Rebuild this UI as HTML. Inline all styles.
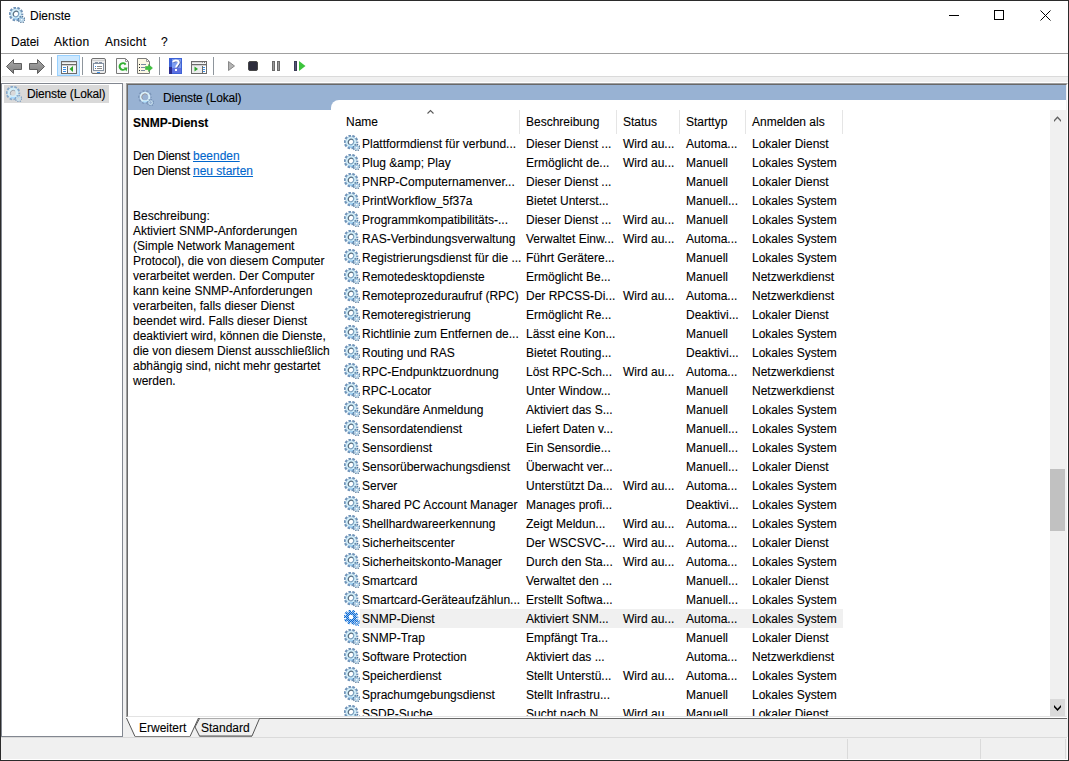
<!DOCTYPE html>
<html><head><meta charset="utf-8">
<style>
*{box-sizing:border-box;margin:0;padding:0}
html,body{width:1069px;height:761px;overflow:hidden;background:#fff}
body{font-family:"Liberation Sans",sans-serif;font-size:12px;color:#000;position:relative;-webkit-text-stroke:0.1px currentColor}
.a{position:absolute}
.t{position:absolute;white-space:nowrap;line-height:19px;height:19px}
.d{position:absolute;white-space:nowrap;line-height:15px;left:133px}
.lnk{color:#0066cc;text-decoration:underline}
</style></head><body>
<svg width="0" height="0" style="position:absolute">
<defs>
<pattern id="dith" width="2" height="2" patternUnits="userSpaceOnUse"><rect width="2" height="2" fill="#0a64d0"/><rect width="1" height="1" fill="#8cc0f0"/><rect x="1" y="1" width="1" height="1" fill="#8cc0f0"/></pattern>
<symbol id="g" viewBox="0 0 16 16">
<circle cx="7" cy="7" r="6.1" fill="none" stroke="#6f93b8" stroke-width="2.4" stroke-dasharray="2.5 1.33" stroke-dashoffset="1.3"/>
<circle cx="7" cy="7" r="3.8" fill="none" stroke="#c2e4f5" stroke-width="3"/>
<circle cx="7" cy="7" r="5.3" fill="none" stroke="#86abc9" stroke-width="0.5"/>
<circle cx="7" cy="7" r="4.1" fill="none" stroke="#d9f3fc" stroke-width="1.4"/>
<path d="M4.9 9.1A3 3 0 0 1 9.1 4.9" fill="none" stroke="#5b6f80" stroke-width="1.1"/>
<path d="M9.1 4.9A3 3 0 0 1 4.9 9.1" fill="none" stroke="#7d9fbd" stroke-width="1.1"/>
<path d="M5 11.6Q7 12.6 9.5 11.4" fill="none" stroke="#8cc8f5" stroke-width="1"/>
<circle cx="12.6" cy="12.6" r="3" fill="none" stroke="#4f7396" stroke-width="1.6" stroke-dasharray="1.2 1.15"/>
<circle cx="12.6" cy="12.6" r="1.6" fill="none" stroke="#a9cde6" stroke-width="1.4"/>
</symbol>
<symbol id="gsel" viewBox="0 0 16 16">
<circle cx="7" cy="7" r="6.1" fill="none" stroke="url(#dith)" stroke-width="2.4" stroke-dasharray="2.5 1.33" stroke-dashoffset="1.3"/>
<circle cx="7" cy="7" r="3.8" fill="none" stroke="url(#dith)" stroke-width="3"/>
<circle cx="12.6" cy="12.6" r="3" fill="none" stroke="url(#dith)" stroke-width="1.6" stroke-dasharray="1.2 1.15"/>
<circle cx="12.6" cy="12.6" r="1.6" fill="none" stroke="url(#dith)" stroke-width="1.4"/>
</symbol>
<symbol id="gh" viewBox="0 0 16 16">
<circle cx="7" cy="7" r="6.1" fill="none" stroke="#7590b4" stroke-opacity=".75" stroke-width="1.8" stroke-dasharray="2.1 1.73" stroke-dashoffset="1.3"/>
<circle cx="7" cy="7" r="4.3" fill="none" stroke="#d8f1fa" stroke-width="1.9"/>
<path d="M4.7 9.3A3.2 3.2 0 0 1 9.3 4.7" fill="none" stroke="#9a8478" stroke-opacity=".8" stroke-width="0.8"/>
<path d="M5 11.5Q7 12.5 9.5 11.3" fill="none" stroke="#a8dcff" stroke-width="1.1"/>
<circle cx="12.6" cy="12.6" r="3" fill="none" stroke="#6a88ac" stroke-opacity=".8" stroke-width="1.3" stroke-dasharray="1.1 1.25"/>
<circle cx="12.6" cy="12.6" r="1.8" fill="none" stroke="#cde6f2" stroke-width="1"/>
</symbol>
<symbol id="gt" viewBox="0 0 16 16">
<circle cx="7" cy="7" r="6.1" fill="none" stroke="#86a9cb" stroke-width="2.2" stroke-dasharray="2.5 1.33" stroke-dashoffset="1.3"/>
<circle cx="7" cy="7" r="4.1" fill="none" stroke="#d2eefa" stroke-width="2.6"/>
<path d="M4.9 9.1A3 3 0 0 1 9.1 4.9" fill="none" stroke="#8a8f98" stroke-opacity=".8" stroke-width="0.9"/>
<path d="M5 11.4Q7 12.4 9.5 11.2" fill="none" stroke="#9fd4ff" stroke-width="1.2"/>
<circle cx="12.6" cy="12.6" r="3" fill="none" stroke="#7a9cc0" stroke-width="1.4" stroke-dasharray="1.2 1.15"/>
<circle cx="12.6" cy="12.6" r="1.7" fill="none" stroke="#c4e2f2" stroke-width="1.2"/>
</symbol>
</defs>
</svg>

<!-- window frame -->
<div class="a" style="left:0;top:0;width:1069px;height:761px;border:1px solid #2b2b2b"></div>

<!-- title bar -->
<svg class="a" style="left:9px;top:7px" width="16" height="16"><use href="#g"/></svg>
<div class="t" style="left:30px;top:7px">Dienste</div>
<div class="a" style="left:949px;top:15px;width:10px;height:1px;background:#000"></div>
<div class="a" style="left:994px;top:10px;width:10px;height:10px;border:1px solid #000"></div>
<svg class="a" style="left:1040px;top:10px" width="11" height="11"><path d="M0.5 0.5L10.5 10.5M10.5 0.5L0.5 10.5" stroke="#000" stroke-width="1"/></svg>

<!-- menu bar -->
<div class="t" style="left:11px;top:33px">Datei</div>
<div class="t" style="left:54px;top:33px;letter-spacing:0.35px">Aktion</div>
<div class="t" style="left:105px;top:33px;letter-spacing:0.3px">Ansicht</div>
<div class="t" style="left:161px;top:33px">?</div>
<div class="a" style="left:1px;top:53px;width:1067px;height:1px;background:#a0a0a0"></div>

<!-- toolbar -->
<div id="toolbar"><svg class="a" style="left:0;top:54px" width="320" height="22" shape-rendering="crispEdges">
<defs>
<linearGradient id="arr" x1="0" y1="0" x2="0" y2="1"><stop offset="0" stop-color="#a9a9a9"/><stop offset="1" stop-color="#7d7d7d"/></linearGradient>
</defs>
<g transform="translate(0,-54)">
<!-- back / forward -->
<path d="M6.5 66.5L13.5 59.5V63.5H21.5V69.5H13.5V73.5Z" fill="url(#arr)" stroke="#5e5e5e" stroke-width="1" shape-rendering="geometricPrecision"/>
<path d="M44.5 66.5L37.5 59.5V63.5H29.5V69.5H37.5V73.5Z" fill="url(#arr)" stroke="#5e5e5e" stroke-width="1" shape-rendering="geometricPrecision"/>
<rect x="51" y="57" width="1" height="18" fill="#8e959c"/>
<!-- pressed toggle button -->
<rect x="57.5" y="55.5" width="22" height="20" fill="#cce8ff" stroke="#99d1ff"/>
<rect x="61.5" y="61.5" width="15" height="12" fill="#f4f4f4" stroke="#6b6b6b"/>
<rect x="62" y="62" width="14" height="1" fill="#d8d8d8"/>
<rect x="62" y="64" width="14" height="1" fill="#6b6b6b"/>
<rect x="62" y="65" width="14" height="1" fill="#cfcfcf"/>
<rect x="67" y="66" width="1" height="7" fill="#6b6b6b"/>
<rect x="62" y="66" width="5" height="7" fill="#fff"/>
<rect x="63" y="67" width="3" height="1" fill="#3b8fe6"/>
<rect x="63" y="69" width="3" height="1" fill="#3b8fe6"/>
<rect x="63" y="71" width="3" height="1" fill="#3b8fe6"/>
<path d="M69.5 69L73 66V72Z" fill="#2aa52a" shape-rendering="geometricPrecision"/>
<rect x="82" y="57" width="1" height="18" fill="#8e959c"/>
<!-- properties -->
<rect x="91.5" y="58.5" width="14" height="15" rx="1.5" fill="#ececec" stroke="#6f6f6f" shape-rendering="geometricPrecision"/>
<rect x="92" y="60" width="13" height="1" fill="#d0d0d0"/>
<rect x="93.5" y="63.5" width="10" height="7" fill="#fff" stroke="#8592a3"/>
<rect x="95" y="62" width="3" height="2" fill="#8592a3"/>
<rect x="99" y="62" width="3" height="2" fill="#8592a3"/>
<rect x="95" y="66" width="1" height="1" fill="#2f8ff0"/>
<rect x="97" y="66" width="5" height="1" fill="#8a8a8a"/>
<rect x="95" y="68" width="1" height="1" fill="#777"/>
<rect x="97" y="68" width="5" height="1" fill="#8a8a8a"/>
<rect x="97" y="72" width="3" height="1" fill="#3a8ee6"/>
<!-- refresh doc -->
<path d="M116.5 58.5H125.5L128.5 61.5V73.5H116.5Z" fill="#fafafa" stroke="#7a7a7a" shape-rendering="geometricPrecision"/>
<path d="M125.5 58.5V61.5H128.5" fill="none" stroke="#9a9a9a" shape-rendering="geometricPrecision"/>
<path d="M124.8 69.2A3.3 3.3 0 1 1 125.6 64.6" fill="none" stroke="#32b032" stroke-width="2" shape-rendering="geometricPrecision"/>
<path d="M123.5 67.5L127.5 67.5L126.5 71.5Z" fill="#32b032" shape-rendering="geometricPrecision"/>
<!-- export list -->
<path d="M137.5 58.5H146.5L149.5 61.5V73.5H137.5Z" fill="#fcf8e4" stroke="#7a7a7a" shape-rendering="geometricPrecision"/>
<path d="M146.5 58.5V61.5H149.5" fill="none" stroke="#9a9a9a" shape-rendering="geometricPrecision"/>
<rect x="139" y="64" width="1" height="1" fill="#222"/>
<rect x="139" y="67" width="1" height="1" fill="#222"/>
<rect x="139" y="70" width="1" height="1" fill="#222"/>
<rect x="141" y="64" width="5" height="1" fill="#7a8aa0"/>
<rect x="141" y="67" width="4" height="1" fill="#7a8aa0"/>
<rect x="141" y="70" width="4" height="1" fill="#7a8aa0"/>
<path d="M145.5 66.5H148.5V64.5L152.5 68L148.5 71.5V69.5H145.5Z" fill="#3cc43c" stroke="#2ea02e" stroke-width=".5" shape-rendering="geometricPrecision"/>
<rect x="159" y="57" width="1" height="18" fill="#8e959c"/>
<!-- help -->
<rect x="169" y="58" width="13" height="16" fill="#3d62d6"/>
<rect x="169" y="67" width="3" height="7" fill="#2c2c8e"/>
<rect x="172" y="59" width="9" height="14" fill="#7d9cf0"/>
<rect x="172" y="68" width="9" height="5" fill="#5d6fe0"/>
<path d="M174 62.5C174 60.3 179.5 60.2 179.5 62.8C179.5 64.8 177 65.2 177 67.8" fill="none" stroke="#3a4a8a" stroke-width="2" shape-rendering="geometricPrecision"/>
<path d="M173.2 62.2C173.2 59.8 178.8 59.8 178.8 62.5C178.8 64.5 176.2 64.8 176.2 67.5" fill="none" stroke="#fff" stroke-width="2" shape-rendering="geometricPrecision"/>
<rect x="175" y="69" width="2" height="2" fill="#fff"/>
<!-- window play -->
<rect x="191.5" y="61.5" width="15" height="12" fill="#f4f4f4" stroke="#6b6b6b"/>
<rect x="192" y="62" width="11" height="1" fill="#d8d8d8"/>
<rect x="204" y="62" width="1" height="1" fill="#777"/>
<rect x="202" y="62" width="1" height="1" fill="#999"/>
<rect x="192" y="64" width="14" height="1" fill="#6b6b6b"/>
<rect x="192" y="65" width="14" height="1" fill="#cfcfcf"/>
<rect x="202" y="66" width="1" height="7" fill="#6b6b6b"/>
<rect x="192" y="66" width="10" height="7" fill="#ededed"/>
<rect x="203" y="66" width="3" height="7" fill="#fff"/>
<rect x="203" y="67" width="2" height="1" fill="#3b8fe6"/>
<rect x="203" y="69" width="2" height="1" fill="#3b8fe6"/>
<rect x="203" y="71" width="2" height="1" fill="#3b8fe6"/>
<path d="M194.5 66.5L198 69L194.5 71.5Z" fill="#2aa52a" shape-rendering="geometricPrecision"/>
<rect x="213" y="57" width="1" height="18" fill="#8e959c"/>
<!-- play disabled -->
<path d="M228.5 61.5L234.5 66L228.5 70.5Z" fill="#b4b4b4" stroke="#888" shape-rendering="geometricPrecision"/>
<!-- stop -->
<rect x="248.5" y="61.5" width="9" height="9" rx="1.5" fill="#2c2c3c" stroke="#474747" shape-rendering="geometricPrecision"/>
<!-- pause -->
<rect x="272.5" y="61.5" width="2" height="9" fill="#9a9a9a" stroke="#6a6a6a"/>
<rect x="277.5" y="61.5" width="2" height="9" fill="#9a9a9a" stroke="#6a6a6a"/>
<!-- restart -->
<rect x="294.5" y="61.5" width="2" height="9" fill="#555577" stroke="#3a3a55"/>
<path d="M299 61L305.5 66L299 71Z" fill="#3cc43c" shape-rendering="geometricPrecision"/>
</g>
</svg>
</div>
<div class="a" style="left:2px;top:76px;width:1066px;height:1px;background:#dadada"></div>
<div class="a" style="left:1px;top:77px;width:1067px;height:683px;background:#f0f0f0"></div>
<div class="a" style="left:1px;top:82px;width:1067px;height:1px;background:#fff"></div>

<!-- left pane -->
<div class="a" style="left:1px;top:83px;width:122px;height:654px;border:1px solid #828790;background:#fff"></div>
<div class="a" style="left:4px;top:85px;width:105px;height:18px;background:#d9d9d9"></div>
<svg class="a" style="left:6px;top:86px" width="16" height="16"><use href="#gt"/></svg>
<div class="t" style="left:27px;top:85px;letter-spacing:-0.15px">Dienste (Lokal)</div>

<!-- right pane -->
<div class="a" style="left:126px;top:83px;width:942px;height:635px;border-left:1px solid #a0a0a0;border-top:1px solid #a0a0a0;border-right:1px solid #fff;border-bottom:1px solid #fff;background:#fff"></div>
<div class="a" style="left:127px;top:84px;width:940px;height:633px;border-left:1px solid #696969;border-top:1px solid #696969;border-right:1px solid #f0f0f0;border-bottom:1px solid #e3e3e3"></div>
<div class="a" style="left:128px;top:85px;width:938px;height:15px;background:#98b2d3"></div>
<div class="a" style="left:128px;top:100px;width:211px;height:10px;background:#98b2d3"></div>
<div class="a" style="left:331px;top:100px;width:16px;height:10px;background:#fff;border-top-left-radius:8px"></div>
<svg class="a" style="left:138px;top:90px" width="16" height="16"><use href="#gh"/></svg>
<div class="t" style="left:163px;top:89px;letter-spacing:-0.15px">Dienste (Lokal)</div>

<!-- description panel -->
<div class="t" style="left:133px;top:114px;font-weight:bold">SNMP-Dienst</div>
<div class="d" style="top:149px;letter-spacing:-0.25px">Den Dienst</div><div class="d lnk" style="top:149px;left:193px">beenden</div>
<div class="d" style="top:164px;letter-spacing:-0.25px">Den Dienst</div><div class="d lnk" style="top:164px;left:193px">neu starten</div>
<div class="d" style="top:209px">Beschreibung:</div>
<div class="d" style="top:224px">Aktiviert SNMP-Anforderungen</div>
<div class="d" style="top:239px">(Simple Network Management</div>
<div class="d" style="top:254px">Protocol), die von diesem Computer</div>
<div class="d" style="top:269px">verarbeitet werden. Der Computer</div>
<div class="d" style="top:284px">kann keine SNMP-Anforderungen</div>
<div class="d" style="top:299px">verarbeiten, falls dieser Dienst</div>
<div class="d" style="top:314px">beendet wird. Falls dieser Dienst</div>
<div class="d" style="top:329px">deaktiviert wird, können die Dienste,</div>
<div class="d" style="top:344px">die von diesem Dienst ausschließlich</div>
<div class="d" style="top:359px">abhängig sind, nicht mehr gestartet</div>
<div class="d" style="top:374px">werden.</div>

<!-- list header -->
<div class="t" style="left:346px;top:113px">Name</div>
<div class="t" style="left:526px;top:113px">Beschreibung</div>
<div class="t" style="left:623px;top:113px">Status</div>
<div class="t" style="left:686px;top:113px">Starttyp</div>
<div class="t" style="left:752px;top:113px">Anmelden als</div>
<div class="a" style="left:519px;top:110px;width:1px;height:24px;background:#e5e5e5"></div>
<div class="a" style="left:616px;top:110px;width:1px;height:24px;background:#e5e5e5"></div>
<div class="a" style="left:679px;top:110px;width:1px;height:24px;background:#e5e5e5"></div>
<div class="a" style="left:745px;top:110px;width:1px;height:24px;background:#e5e5e5"></div>
<div class="a" style="left:842px;top:110px;width:1px;height:24px;background:#e5e5e5"></div>
<svg class="a" style="left:426px;top:109px" width="9" height="6"><path d="M1.5 4.5L4.5 1.5L7.5 4.5" fill="none" stroke="#5a5a5a" stroke-width="1.1"/></svg>

<!-- list rows -->
<div class="a" style="left:331px;top:110px;width:719px;height:606px;overflow:hidden">
<svg class="a" style="left:13px;top:25px" width="16" height="16"><use href="#g"/></svg>
<div class="t" style="left:31px;top:25px">Plattformdienst für verbund...</div>
<div class="t" style="left:195px;top:25px">Dieser Dienst ...</div>
<div class="t" style="left:292px;top:25px">Wird au...</div>
<div class="t" style="left:355px;top:25px">Automa...</div>
<div class="t" style="left:421px;top:25px">Lokaler Dienst</div>
<svg class="a" style="left:13px;top:44px" width="16" height="16"><use href="#g"/></svg>
<div class="t" style="left:31px;top:44px">Plug &amp;amp; Play</div>
<div class="t" style="left:195px;top:44px">Ermöglicht de...</div>
<div class="t" style="left:292px;top:44px">Wird au...</div>
<div class="t" style="left:355px;top:44px">Manuell</div>
<div class="t" style="left:421px;top:44px">Lokales System</div>
<svg class="a" style="left:13px;top:63px" width="16" height="16"><use href="#g"/></svg>
<div class="t" style="left:31px;top:63px">PNRP-Computernamenver...</div>
<div class="t" style="left:195px;top:63px">Dieser Dienst ...</div>
<div class="t" style="left:355px;top:63px">Manuell</div>
<div class="t" style="left:421px;top:63px">Lokaler Dienst</div>
<svg class="a" style="left:13px;top:82px" width="16" height="16"><use href="#g"/></svg>
<div class="t" style="left:31px;top:82px">PrintWorkflow_5f37a</div>
<div class="t" style="left:195px;top:82px">Bietet Unterst...</div>
<div class="t" style="left:355px;top:82px">Manuell...</div>
<div class="t" style="left:421px;top:82px">Lokales System</div>
<svg class="a" style="left:13px;top:101px" width="16" height="16"><use href="#g"/></svg>
<div class="t" style="left:31px;top:101px">Programmkompatibilitäts-...</div>
<div class="t" style="left:195px;top:101px">Dieser Dienst ...</div>
<div class="t" style="left:292px;top:101px">Wird au...</div>
<div class="t" style="left:355px;top:101px">Manuell</div>
<div class="t" style="left:421px;top:101px">Lokales System</div>
<svg class="a" style="left:13px;top:120px" width="16" height="16"><use href="#g"/></svg>
<div class="t" style="left:31px;top:120px">RAS-Verbindungsverwaltung</div>
<div class="t" style="left:195px;top:120px">Verwaltet Einw...</div>
<div class="t" style="left:292px;top:120px">Wird au...</div>
<div class="t" style="left:355px;top:120px">Automa...</div>
<div class="t" style="left:421px;top:120px">Lokales System</div>
<svg class="a" style="left:13px;top:139px" width="16" height="16"><use href="#g"/></svg>
<div class="t" style="left:31px;top:139px">Registrierungsdienst für die ...</div>
<div class="t" style="left:195px;top:139px">Führt Gerätere...</div>
<div class="t" style="left:355px;top:139px">Manuell</div>
<div class="t" style="left:421px;top:139px">Lokales System</div>
<svg class="a" style="left:13px;top:158px" width="16" height="16"><use href="#g"/></svg>
<div class="t" style="left:31px;top:158px">Remotedesktopdienste</div>
<div class="t" style="left:195px;top:158px">Ermöglicht Be...</div>
<div class="t" style="left:355px;top:158px">Manuell</div>
<div class="t" style="left:421px;top:158px">Netzwerkdienst</div>
<svg class="a" style="left:13px;top:177px" width="16" height="16"><use href="#g"/></svg>
<div class="t" style="left:31px;top:177px">Remoteprozeduraufruf (RPC)</div>
<div class="t" style="left:195px;top:177px">Der RPCSS-Di...</div>
<div class="t" style="left:292px;top:177px">Wird au...</div>
<div class="t" style="left:355px;top:177px">Automa...</div>
<div class="t" style="left:421px;top:177px">Netzwerkdienst</div>
<svg class="a" style="left:13px;top:196px" width="16" height="16"><use href="#g"/></svg>
<div class="t" style="left:31px;top:196px">Remoteregistrierung</div>
<div class="t" style="left:195px;top:196px">Ermöglicht Re...</div>
<div class="t" style="left:355px;top:196px">Deaktivi...</div>
<div class="t" style="left:421px;top:196px">Lokaler Dienst</div>
<svg class="a" style="left:13px;top:215px" width="16" height="16"><use href="#g"/></svg>
<div class="t" style="left:31px;top:215px">Richtlinie zum Entfernen de...</div>
<div class="t" style="left:195px;top:215px">Lässt eine Kon...</div>
<div class="t" style="left:355px;top:215px">Manuell</div>
<div class="t" style="left:421px;top:215px">Lokales System</div>
<svg class="a" style="left:13px;top:234px" width="16" height="16"><use href="#g"/></svg>
<div class="t" style="left:31px;top:234px">Routing und RAS</div>
<div class="t" style="left:195px;top:234px">Bietet Routing...</div>
<div class="t" style="left:355px;top:234px">Deaktivi...</div>
<div class="t" style="left:421px;top:234px">Lokales System</div>
<svg class="a" style="left:13px;top:253px" width="16" height="16"><use href="#g"/></svg>
<div class="t" style="left:31px;top:253px">RPC-Endpunktzuordnung</div>
<div class="t" style="left:195px;top:253px">Löst RPC-Sch...</div>
<div class="t" style="left:292px;top:253px">Wird au...</div>
<div class="t" style="left:355px;top:253px">Automa...</div>
<div class="t" style="left:421px;top:253px">Netzwerkdienst</div>
<svg class="a" style="left:13px;top:272px" width="16" height="16"><use href="#g"/></svg>
<div class="t" style="left:31px;top:272px">RPC-Locator</div>
<div class="t" style="left:195px;top:272px">Unter Window...</div>
<div class="t" style="left:355px;top:272px">Manuell</div>
<div class="t" style="left:421px;top:272px">Netzwerkdienst</div>
<svg class="a" style="left:13px;top:291px" width="16" height="16"><use href="#g"/></svg>
<div class="t" style="left:31px;top:291px">Sekundäre Anmeldung</div>
<div class="t" style="left:195px;top:291px">Aktiviert das S...</div>
<div class="t" style="left:355px;top:291px">Manuell</div>
<div class="t" style="left:421px;top:291px">Lokales System</div>
<svg class="a" style="left:13px;top:310px" width="16" height="16"><use href="#g"/></svg>
<div class="t" style="left:31px;top:310px">Sensordatendienst</div>
<div class="t" style="left:195px;top:310px">Liefert Daten v...</div>
<div class="t" style="left:355px;top:310px">Manuell...</div>
<div class="t" style="left:421px;top:310px">Lokales System</div>
<svg class="a" style="left:13px;top:329px" width="16" height="16"><use href="#g"/></svg>
<div class="t" style="left:31px;top:329px">Sensordienst</div>
<div class="t" style="left:195px;top:329px">Ein Sensordie...</div>
<div class="t" style="left:355px;top:329px">Manuell...</div>
<div class="t" style="left:421px;top:329px">Lokales System</div>
<svg class="a" style="left:13px;top:348px" width="16" height="16"><use href="#g"/></svg>
<div class="t" style="left:31px;top:348px">Sensorüberwachungsdienst</div>
<div class="t" style="left:195px;top:348px">Überwacht ver...</div>
<div class="t" style="left:355px;top:348px">Manuell...</div>
<div class="t" style="left:421px;top:348px">Lokaler Dienst</div>
<svg class="a" style="left:13px;top:367px" width="16" height="16"><use href="#g"/></svg>
<div class="t" style="left:31px;top:367px">Server</div>
<div class="t" style="left:195px;top:367px">Unterstützt Da...</div>
<div class="t" style="left:292px;top:367px">Wird au...</div>
<div class="t" style="left:355px;top:367px">Automa...</div>
<div class="t" style="left:421px;top:367px">Lokales System</div>
<svg class="a" style="left:13px;top:386px" width="16" height="16"><use href="#g"/></svg>
<div class="t" style="left:31px;top:386px">Shared PC Account Manager</div>
<div class="t" style="left:195px;top:386px">Manages profi...</div>
<div class="t" style="left:355px;top:386px">Deaktivi...</div>
<div class="t" style="left:421px;top:386px">Lokales System</div>
<svg class="a" style="left:13px;top:405px" width="16" height="16"><use href="#g"/></svg>
<div class="t" style="left:31px;top:405px">Shellhardwareerkennung</div>
<div class="t" style="left:195px;top:405px">Zeigt Meldun...</div>
<div class="t" style="left:292px;top:405px">Wird au...</div>
<div class="t" style="left:355px;top:405px">Automa...</div>
<div class="t" style="left:421px;top:405px">Lokales System</div>
<svg class="a" style="left:13px;top:424px" width="16" height="16"><use href="#g"/></svg>
<div class="t" style="left:31px;top:424px">Sicherheitscenter</div>
<div class="t" style="left:195px;top:424px">Der WSCSVC-...</div>
<div class="t" style="left:292px;top:424px">Wird au...</div>
<div class="t" style="left:355px;top:424px">Automa...</div>
<div class="t" style="left:421px;top:424px">Lokaler Dienst</div>
<svg class="a" style="left:13px;top:443px" width="16" height="16"><use href="#g"/></svg>
<div class="t" style="left:31px;top:443px">Sicherheitskonto-Manager</div>
<div class="t" style="left:195px;top:443px">Durch den Sta...</div>
<div class="t" style="left:292px;top:443px">Wird au...</div>
<div class="t" style="left:355px;top:443px">Automa...</div>
<div class="t" style="left:421px;top:443px">Lokales System</div>
<svg class="a" style="left:13px;top:462px" width="16" height="16"><use href="#g"/></svg>
<div class="t" style="left:31px;top:462px">Smartcard</div>
<div class="t" style="left:195px;top:462px">Verwaltet den ...</div>
<div class="t" style="left:355px;top:462px">Manuell...</div>
<div class="t" style="left:421px;top:462px">Lokaler Dienst</div>
<svg class="a" style="left:13px;top:481px" width="16" height="16"><use href="#g"/></svg>
<div class="t" style="left:31px;top:481px">Smartcard-Geräteaufzählun...</div>
<div class="t" style="left:195px;top:481px">Erstellt Softwa...</div>
<div class="t" style="left:355px;top:481px">Manuell...</div>
<div class="t" style="left:421px;top:481px">Lokales System</div>
<div class="a" style="left:29px;top:499px;width:483px;height:19px;background:#f0f0f0"></div>
<svg class="a" style="left:13px;top:500px" width="16" height="16"><use href="#gsel"/></svg>
<div class="t" style="left:31px;top:500px">SNMP-Dienst</div>
<div class="t" style="left:195px;top:500px">Aktiviert SNM...</div>
<div class="t" style="left:292px;top:500px">Wird au...</div>
<div class="t" style="left:355px;top:500px">Automa...</div>
<div class="t" style="left:421px;top:500px">Lokales System</div>
<svg class="a" style="left:13px;top:519px" width="16" height="16"><use href="#g"/></svg>
<div class="t" style="left:31px;top:519px">SNMP-Trap</div>
<div class="t" style="left:195px;top:519px">Empfängt Tra...</div>
<div class="t" style="left:355px;top:519px">Manuell</div>
<div class="t" style="left:421px;top:519px">Lokaler Dienst</div>
<svg class="a" style="left:13px;top:538px" width="16" height="16"><use href="#g"/></svg>
<div class="t" style="left:31px;top:538px">Software Protection</div>
<div class="t" style="left:195px;top:538px">Aktiviert das ...</div>
<div class="t" style="left:355px;top:538px">Automa...</div>
<div class="t" style="left:421px;top:538px">Netzwerkdienst</div>
<svg class="a" style="left:13px;top:557px" width="16" height="16"><use href="#g"/></svg>
<div class="t" style="left:31px;top:557px">Speicherdienst</div>
<div class="t" style="left:195px;top:557px">Stellt Unterstü...</div>
<div class="t" style="left:292px;top:557px">Wird au...</div>
<div class="t" style="left:355px;top:557px">Automa...</div>
<div class="t" style="left:421px;top:557px">Lokales System</div>
<svg class="a" style="left:13px;top:576px" width="16" height="16"><use href="#g"/></svg>
<div class="t" style="left:31px;top:576px">Sprachumgebungsdienst</div>
<div class="t" style="left:195px;top:576px">Stellt Infrastru...</div>
<div class="t" style="left:355px;top:576px">Manuell</div>
<div class="t" style="left:421px;top:576px">Lokales System</div>
<svg class="a" style="left:13px;top:595px" width="16" height="16"><use href="#g"/></svg>
<div class="t" style="left:31px;top:595px">SSDP-Suche</div>
<div class="t" style="left:195px;top:595px">Sucht nach N...</div>
<div class="t" style="left:292px;top:595px">Wird au...</div>
<div class="t" style="left:355px;top:595px">Manuell</div>
<div class="t" style="left:421px;top:595px">Lokaler Dienst</div>
</div>

<!-- scrollbar -->
<div class="a" style="left:1050px;top:110px;width:16px;height:606px;background:#f0f0f0"></div>
<svg class="a" style="left:1050px;top:110px" width="16" height="16"><path d="M4 10L7.5 6.3L11 10V12L7.5 8.3L4 12Z" fill="#606060"/></svg>
<div class="a" style="left:1050px;top:469px;width:15px;height:62px;background:#c1c1c1"></div>
<div class="a" style="left:1050px;top:699px;width:15px;height:17px;background:#dadada"></div>
<svg class="a" style="left:1050px;top:699px" width="16" height="16"><path d="M4 6L7.5 9.7L11 6V8.3L7.5 12L4 8.3Z" fill="#000"/></svg>

<!-- tab strip -->
<svg class="a" style="left:126px;top:716px" width="942" height="22">
<path d="M0 2.5H941" stroke="#696969" stroke-width="1"/>
<path d="M0 1V2L9 20H64L72.5 2V1Z" fill="#fff"/>
<path d="M0.5 2L9 20.5H64L72.5 2" fill="none" stroke="#555" stroke-width="1"/>
<path d="M73.5 2.5L69 11L73.5 20H126L133.5 2.5" fill="#f0f0f0" stroke="#555" stroke-width="1"/>
<path d="M9 20.5H64M73.5 20.5H126" stroke="#808080" stroke-width="1"/>
</svg>
<div class="t" style="left:139px;top:719px">Erweitert</div>
<div class="t" style="left:201px;top:719px">Standard</div>

<!-- status bar -->
<div class="a" style="left:1px;top:737px;width:1067px;height:1px;background:#dadada"></div>
<div class="a" style="left:847px;top:739px;width:1px;height:20px;background:#dadada"></div>
<div class="a" style="left:980px;top:739px;width:1px;height:20px;background:#dadada"></div>
<div class="a" style="left:1065px;top:739px;width:1px;height:20px;background:#dadada"></div>
<div class="a" style="left:1px;top:759px;width:1067px;height:1px;background:#fff"></div>
<div class="a" style="left:1067px;top:737px;width:1px;height:23px;background:#fff"></div>
</body></html>
